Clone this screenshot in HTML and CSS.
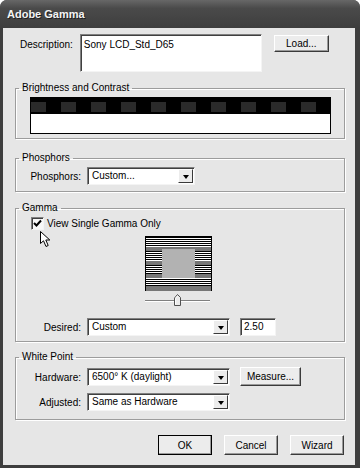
FILE: index.html
```html
<!DOCTYPE html>
<html lang="en">
<head>
  <meta charset="UTF-8">
  <meta name="viewport" content="width=device-width, initial-scale=1.0">
  <title>Adobe Gamma</title>
  <link rel="stylesheet" href="styles.css">
</head>
<body>

  <div class="window">
    <div class="titlebar">Adobe Gamma</div>

    <div class="client">
      <!-- Description -->
      <div class="desc-row">
        <span class="desc-label">Description:</span>
        <div class="textbox">Sony LCD_Std_D65</div>
        <button class="btn load-btn">Load...</button>
      </div>

      <!-- Brightness and Contrast -->
      <fieldset class="group group-bc">
        <legend>Brightness and Contrast</legend>
        <div class="bc-bar">
          <div class="bc-dark"></div>
          <div class="bc-light"></div>
        </div>
      </fieldset>

      <!-- Phosphors -->
      <fieldset class="group group-phos">
        <legend>Phosphors</legend>
        <div class="row">
          <span class="label">Phosphors:</span>
          <div class="combo combo-short"><span class="combo-text">Custom...</span><span class="combo-btn"></span></div>
        </div>
      </fieldset>

      <!-- Gamma -->
      <fieldset class="group group-gamma">
        <legend>Gamma</legend>
        <label class="check-row">
          <span class="checkbox">
            <svg width="9" height="9" viewBox="0 0 9 9"><path d="M1 4 L3.5 6.5 L8 1.5" fill="none" stroke="#000" stroke-width="2"/></svg>
          </span>
          View Single Gamma Only
        </label>
        <div class="gamma-box"><div class="gamma-inner"></div></div>
        <div class="slider">
          <div class="slider-track"></div>
          <svg class="slider-thumb" width="7" height="12" viewBox="0 0 7 12">
            <path d="M0.5 4 L3.5 0.5 L6.5 3.5 L6.5 11.5 L0.5 11.5 Z" fill="#ececec" stroke="#505050"/>
            <path d="M1.5 4.3 L3.5 2 M1.5 4.5 L1.5 10.5" stroke="#fff" fill="none"/>
          </svg>
        </div>
        <div class="row desired-row">
          <span class="label">Desired:</span>
          <div class="combo"><span class="combo-text">Custom</span><span class="combo-btn"></span></div>
          <div class="numbox">2.50</div>
        </div>
        <svg class="cursor" width="13" height="17" viewBox="0 0 13 17">
          <path d="M0.5 0.5 L0.5 12.5 L3.5 9.8 L6 15.5 L8.2 14.5 L5.8 9 L9.8 9 Z" fill="#fff" stroke="#000" stroke-linejoin="miter"/>
        </svg>
      </fieldset>

      <!-- White Point -->
      <fieldset class="group group-wp">
        <legend>White Point</legend>
        <div class="row">
          <span class="label">Hardware:</span>
          <div class="combo"><span class="combo-text">6500° K (daylight)</span><span class="combo-btn"></span></div>
          <button class="btn measure-btn">Measure...</button>
        </div>
        <div class="row adjusted-row">
          <span class="label">Adjusted:</span>
          <div class="combo"><span class="combo-text">Same as Hardware</span><span class="combo-btn"></span></div>
        </div>
      </fieldset>

      <div class="actions">
        <button class="btn action-btn default-btn">OK</button>
        <button class="btn action-btn">Cancel</button>
        <button class="btn action-btn">Wizard</button>
      </div>
    </div>
  </div>

</body>
</html>
```

FILE: styles.css
```css
body {
  margin: 0;
  background-color: #fff;
  font-family: "Liberation Sans", Arial, sans-serif;
  font-size: 10px;
  color: #000;
}
.window {
  width: 360px;
  height: 468px;
  background-color: #3e3e3e;
  border-radius: 7px 7px 0 0;
  overflow: hidden;
  display: flex;
  flex-direction: column;
}
.titlebar {
  height: 28px;
  box-sizing: border-box;
  padding: 8px 0 0 7px;
  line-height: 13px;
  font-size: 11px;
  font-weight: bold;
  color: #f4f4f4;
  text-shadow: 1px 1px 0 #1e1e1e;
  background: linear-gradient(#676767, #4a4a4a 30%, #3e3e3e);
}
.client {
  margin: 0 5px 3px 3px;
  flex: 1;
  background-color: #e6e6e6;
  padding-top: 6px;
}

/* description row */
.desc-row {
  display: flex;
  align-items: flex-start;
  padding-left: 17px;
}
.desc-label {
  margin-top: 5px;
  line-height: 12px;
}
.textbox {
  margin-left: 7px;
  width: 182px;
  height: 38px;
  box-sizing: border-box;
  background-color: #fff;
  border: 1px solid;
  border-color: #808080 #f4f4f4 #f4f4f4 #808080;
  box-shadow: inset 1px 1px 0 #404040;
  padding: 4px 0 0 3px;
  line-height: 12px;
}

/* buttons */
.btn {
  font-family: inherit;
  font-size: 10px;
  color: #000;
  background-color: #ececec;
  border: 1px solid;
  border-color: #fff #3a3a3a #3a3a3a #fff;
  box-shadow: inset -1px -1px 0 #9a9a9a;
  padding: 0;
  box-sizing: border-box;
}
.load-btn {
  margin: 1px 0 0 12px;
  width: 55px;
  height: 17px;
}
.measure-btn {
  margin-left: 10px;
  width: 61px;
  height: 19px;
  margin-top: -1px;
}

/* group boxes */
.group {
  margin: 0 10px 0 12px;
  padding: 0;
  border: 1px solid #9c9c9c;
  box-shadow: 1px 1px 0 #fff, inset 1px 1px 0 #fff;
  min-width: 0;
}
.group legend {
  margin-left: 3px;
  padding: 0 3px;
  line-height: 12px;
}
.group-bc {
  margin-top: 10px;
}
.group-phos {
  margin-top: 13px;
}
.group-gamma {
  margin-top: 10px;
  position: relative;
}
.group-wp {
  margin-top: 9px;
}

/* brightness bar */
.bc-bar {
  margin: 3px 0 4px 14px;
  width: 301px;
  border: 1px solid #000;
  box-sizing: border-box;
}
.bc-dark {
  height: 15px;
  background: #000 repeating-linear-gradient(90deg, #2a2a2a 0 15px, transparent 15px 30px) 0 4px / 100% 10px no-repeat;
}
.bc-light {
  height: 19px;
  background-color: #fff;
  border-top: 1px solid #000;
}

/* label + combo rows */
.row {
  display: flex;
  align-items: center;
  height: 18px;
}
.group-phos .row {
  margin: 3px 0 6px 0;
}
.label {
  width: 65px;
  text-align: right;
  margin-right: 6px;
}
.combo {
  width: 143px;
  height: 18px;
  box-sizing: border-box;
  display: flex;
  background-color: #fff;
  border: 1px solid;
  border-color: #808080 #f4f4f4 #f4f4f4 #808080;
  box-shadow: inset 1px 1px 0 #404040;
  padding: 1px;
}
.combo-short {
  width: 108px;
}
.combo-text {
  flex: 1;
  padding-left: 3px;
  line-height: 14px;
}
.combo-btn {
  width: 15px;
  box-sizing: border-box;
  background-color: #ececec;
  border: 1px solid;
  border-color: #fff #3a3a3a #3a3a3a #fff;
  display: flex;
  align-items: center;
  justify-content: center;
}
.combo-btn::after {
  content: "";
  border-left: 3.5px solid transparent;
  border-right: 3.5px solid transparent;
  border-top: 4px solid #000;
  margin-top: 1px;
}

/* gamma */
.check-row {
  display: flex;
  align-items: center;
  margin: 3px 0 0 15px;
  height: 13px;
}
.checkbox {
  width: 13px;
  height: 13px;
  box-sizing: border-box;
  background-color: #f8f8f8;
  border: 1px solid;
  border-color: #808080 #f4f4f4 #f4f4f4 #808080;
  box-shadow: inset 1px 1px 0 #404040;
  display: flex;
  align-items: center;
  justify-content: center;
  margin-right: 3px;
}
.gamma-box {
  margin: 6px 0 0 129px;
  width: 67px;
  height: 55px;
  box-sizing: border-box;
  border: 1px solid #000;
  border-bottom: none;
  padding: 12px 0 0 16px;
  background:
    linear-gradient(#767676, #767676) 0 10px / 100% 4px no-repeat,
    linear-gradient(#767676, #767676) 0 24px / 100% 4px no-repeat,
    linear-gradient(#767676, #767676) 0 37px / 100% 4px no-repeat,
    linear-gradient(#767676, #767676) 0 49px / 100% 5px no-repeat,
    repeating-linear-gradient(#000 0 1px, #fff 1px 2px);
}
.gamma-inner {
  width: 33px;
  height: 29px;
  background-color: #b2b2b2;
}
.slider {
  position: relative;
  margin: 3px 0 0 129px;
  width: 65px;
  height: 12px;
}
.slider-track {
  position: relative;
  top: 6px;
  height: 0;
  border-top: 1px solid #808080;
  border-bottom: 1px solid #fff;
}
.slider-thumb {
  position: absolute;
  left: 29px;
  top: 0;
}
.desired-row {
  margin: 12px 0 5px 0;
}
.numbox {
  margin-left: 10px;
  width: 36px;
  height: 18px;
  box-sizing: border-box;
  background-color: #fff;
  border: 1px solid;
  border-color: #808080 #f4f4f4 #f4f4f4 #808080;
  box-shadow: inset 1px 1px 0 #404040;
  padding-left: 3px;
  line-height: 16px;
}
.cursor {
  position: absolute;
  left: 24px;
  top: 17px;
}

/* white point */
.group-wp .row {
  margin-top: 5px;
}
.group-wp .adjusted-row {
  margin: 7px 0 8px 0;
}

/* dialog buttons */
.actions {
  display: flex;
  justify-content: flex-end;
  gap: 12px;
  margin: 15px 11px 0 0;
}
.action-btn {
  width: 54px;
  height: 20px;
}
.default-btn {
  outline: 1px solid #000;
  outline-offset: -1px;
}
```
